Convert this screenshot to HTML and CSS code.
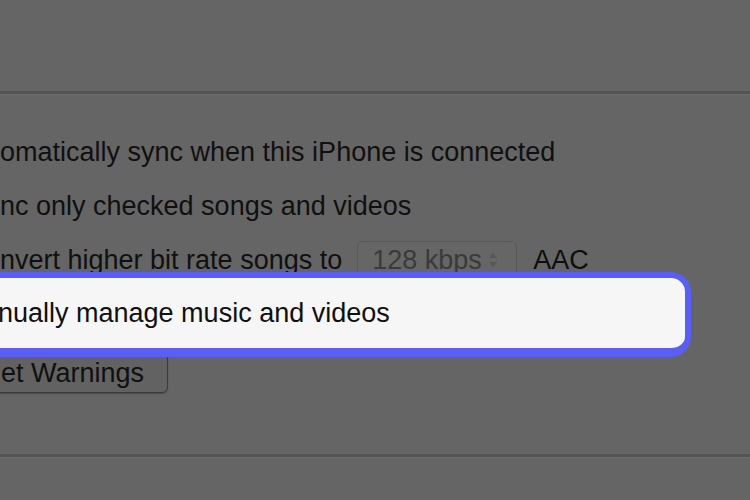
FILE: index.html
```html
<!DOCTYPE html>
<html lang="en">
<head>
  <meta charset="UTF-8" />
  <title>Sync Options</title>
  <link rel="stylesheet" href="styles.css">
</head>
<body>
  <div class="pane">
    <div class="rule top"></div>

    <div class="options">
      <div class="row">omatically sync when this iPhone is connected</div>
      <div class="row">nc only checked songs and videos</div>
      <div class="row">
        <span>nvert higher bit rate songs to</span>
        <div class="select">
          <span>128 kbps</span>
          <svg class="arrows" width="10" height="18" viewBox="0 0 10 18">
            <path d="M1 7 L5 2 L9 7 Z" />
            <path d="M1 11 L5 16 L9 11 Z" />
          </svg>
        </div>
        <span class="codec">AAC</span>
      </div>
      <div class="row highlight">nually manage music and videos</div>
      <button class="btn">et Warnings</button>
    </div>

    <div class="rule bottom"></div>
  </div>
</body>
</html>
```

FILE: styles.css
```css
body {
  margin: 0;
  background-color: #656565;
  font-family: "Liberation Sans", Arial, sans-serif;
  color: #101010;
  overflow: hidden;
  width: 750px;
  height: 500px;
}
.rule {
  height: 3px;
  background-color: #545454;
  border-bottom: 1px solid #6c6c6c;
}
.rule.top {
  margin-top: 91px;
}
.rule.bottom {
  margin-top: 61px;
}
.options {
  padding-top: 30px;
}
.row {
  height: 54px;
  display: flex;
  align-items: center;
  font-size: 27px;
  white-space: nowrap;
}
.select {
  margin-left: 15px;
  width: 160px;
  height: 38px;
  box-sizing: border-box;
  border: 1px solid #5a5a5a;
  border-radius: 6px;
  padding: 0 18px 0 14px;
  display: flex;
  align-items: center;
  justify-content: space-between;
  color: #3a3a3a;
  background-color: #666666;
}
.arrows path {
  fill: #575757;
}
.codec {
  margin-left: 16px;
  color: #0e0e0e;
}
.highlight {
  position: relative;
  z-index: 1;
  margin-top: -15px;
  margin-left: -30px;
  padding-left: 22px;
  width: 721px;
  height: 85px;
  box-sizing: border-box;
  border-style: solid;
  border-color: #5a5ef4;
  border-width: 6px 6px 9px 6px;
  border-radius: 20px;
  background-color: #f6f6f7;
  color: #101010;
}
.btn {
  display: block;
  margin-top: -6px;
  margin-left: -12px;
  height: 42px;
  padding: 2px 23px 0 12px;
  font-family: inherit;
  font-size: 27px;
  color: #101010;
  background-color: #626262;
  border: 1px solid #3c3c3c;
  border-radius: 6px;
  box-shadow: 0 1px 1px #4a4a4a;
}
```
